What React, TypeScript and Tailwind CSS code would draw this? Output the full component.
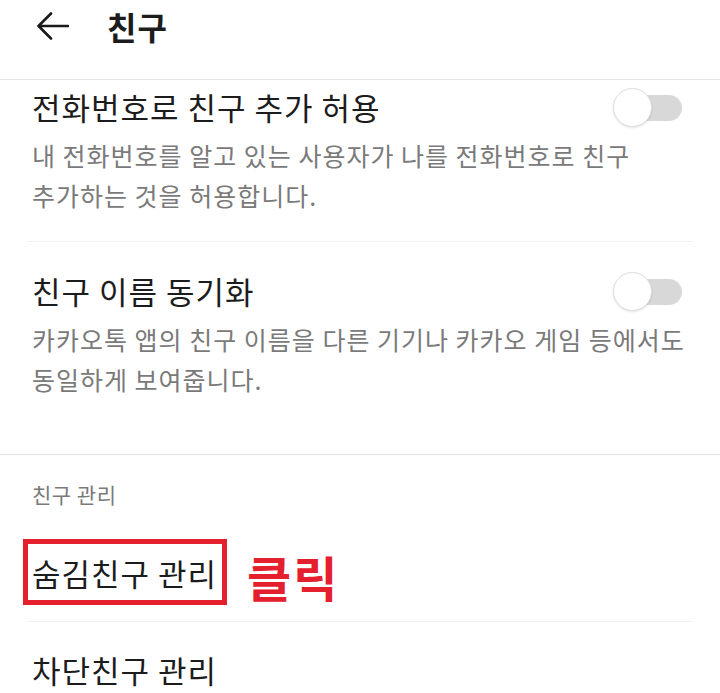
const Toggle = () => (
  <div className="relative w-[69px] h-[39px] shrink-0">
    <div className="absolute right-0 top-[7px] w-[52px] h-[26px] rounded-full bg-[#d8d8d8]" />
    <div className="absolute left-0 top-0 w-[39px] h-[39px] rounded-full bg-white border border-[#dedede] shadow-[0_1px_2px_rgba(0,0,0,0.12)]" />
  </div>
);

const BackArrow = () => (
  <svg width="32" height="28" viewBox="0 0 32 28" fill="none">
    <path
      d="M31 14H2M14 1.5L1.5 14L14 26.5"
      stroke="#1a1a1a"
      strokeWidth="2.6"
      strokeLinecap="round"
      strokeLinejoin="round"
    />
  </svg>
);

const App = () => {
  return (
    <div
      className="w-[720px] h-[693px] overflow-hidden bg-white text-[#1c1c1c]"
      style={{ fontFamily: '"Noto Sans CJK KR", "Noto Sans", sans-serif' }}
    >
      <header className="h-[80px] flex items-start pt-[6px] pl-[37px] border-b border-[#e4e4e4]">
        <div className="h-[40px] flex items-center">
          <BackArrow />
        </div>
        <h1 className="ml-[38px] text-[32px] leading-[40px] font-bold tracking-[1px]">친구</h1>
      </header>

      <div className="px-[28px]">
        <div className="pl-[4px] pr-[10px] pt-[7px] pb-[26px] border-b border-[#f1f1f1]">
          <div className="flex items-center justify-between">
            <span className="text-[31px] leading-[40px] tracking-[1px]">전화번호로 친구 추가 허용</span>
            <Toggle />
          </div>
          <p className="mt-[8px] text-[25px] leading-[40px] tracking-[1px] text-[#7a7a7a] whitespace-nowrap">
            내 전화번호를 알고 있는 사용자가 나를 전화번호로 친구
            <br />
            추가하는 것을 허용합니다.
          </p>
        </div>

        <div className="pl-[4px] pr-[10px] pt-[29px] pb-[55px]">
          <div className="flex items-center justify-between">
            <span className="text-[31px] leading-[40px] tracking-[1px]">친구 이름 동기화</span>
            <Toggle />
          </div>
          <p className="mt-[8px] text-[25px] leading-[40px] tracking-[1px] text-[#7a7a7a] whitespace-nowrap">
            카카오톡 앱의 친구 이름을 다른 기기나 카카오 게임 등에서도
            <br />
            동일하게 보여줍니다.
          </p>
        </div>
      </div>

      <div className="border-t border-[#e4e4e4] px-[28px]">
        <div className="pl-[4px] pt-[25px] text-[21px] leading-[28px] tracking-[0.5px] text-[#7a7a7a]">친구 관리</div>

        <div className="pl-[4px] pt-[45px] pb-[29px] h-[114px] border-b border-[#f1f1f1] flex items-start">
          <span className="relative text-[31px] leading-[40px] tracking-[1px]">
            숨김친구 관리
            <span className="absolute -left-[9px] -right-[10px] -top-[14px] -bottom-[12px] border-[5px] border-[#e5202e]" />
          </span>
          <span className="ml-[30px] mt-[-2px] text-[48px] leading-[50px] font-bold tracking-[2px] text-[#e5202e]">클릭</span>
        </div>

        <div className="pl-[4px] pt-[28px] text-[31px] leading-[40px] tracking-[1px]">차단친구 관리</div>
      </div>
    </div>
  );
};

export default App;
